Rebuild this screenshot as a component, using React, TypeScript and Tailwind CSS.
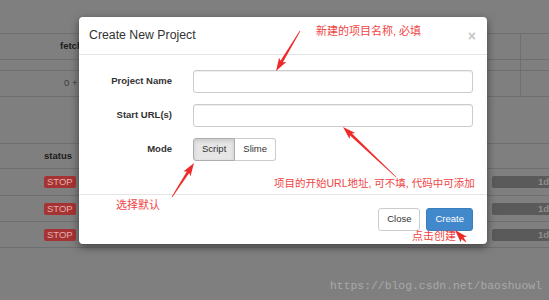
import React from "react"

const arrows = [
  { x1: 300, y1: 31, x2: 276, y2: 71 },
  { x1: 396, y1: 177, x2: 343, y2: 127 },
  { x1: 172, y1: 197, x2: 194, y2: 163 },
  { x1: 466, y1: 242, x2: 455, y2: 230 },
]

// tapered annotation arrow: thin tail, wider shaft near the head
function arrowPoints(x1: number, y1: number, x2: number, y2: number) {
  const dx = x2 - x1
  const dy = y2 - y1
  const len = Math.hypot(dx, dy)
  const ux = dx / len
  const uy = dy / len
  const px = -uy
  const py = ux
  const head = Math.min(11, len * 0.7)
  const hw = 4.2
  const sw = 1.4
  const bx = x2 - ux * head
  const by = y2 - uy * head
  const pts = [
    [x1 + px * 0.3, y1 + py * 0.3],
    [bx + px * sw, by + py * sw],
    [bx - ux * 2 + px * hw, by - uy * 2 + py * hw],
    [x2, y2],
    [bx - ux * 2 - px * hw, by - uy * 2 - py * hw],
    [bx - px * sw, by - py * sw],
    [x1 - px * 0.3, y1 - py * 0.3],
  ]
  return pts.map((p) => p.map((n) => n.toFixed(1)).join(",")).join(" ")
}

const stopRows = ["h-[27px]", "h-[26px]", "h-[27px] border-b"]

export default function App() {
  return (
    <div className="relative w-[549px] h-[300px] overflow-hidden bg-[#7f7f7f] font-['Liberation_Sans',Arial,sans-serif]">
      {/* page behind the backdrop */}
      <div className="pt-[33px] text-[9.5px]">
        <div className="flex h-[26px] border-t border-[#6f6f6f]">
          <div className="w-[521px] border-r border-[#6f6f6f] pl-[60px] flex items-center font-bold text-[#1c1c1c]">
            fetch
          </div>
        </div>
        <div className="flex h-[11px] border-t border-[#6f6f6f]">
          <div className="w-[521px] border-r border-[#6f6f6f]" />
        </div>
        <div className="flex h-[27px] border-t border-b border-[#6f6f6f]">
          <div className="w-[521px] border-r border-[#6f6f6f] pl-[64px] flex items-center text-[#3c3c3c]">
            0 + 0
          </div>
        </div>

        <div className="mt-[46px] h-[25px] border-t border-[#6f6f6f] pl-[44px] flex items-center font-bold text-[#1c1c1c]">
          status
        </div>
        {stopRows.map((cls, i) => (
          <div key={i} className={`${cls} border-t border-[#6f6f6f] flex items-center pl-[44px]`}>
            <span className="h-[12px] leading-[12px] px-[3px] rounded-[2px] bg-[#a63333] text-[#e4acac]">STOP</span>
            <span className="ml-auto w-[57px] h-[12px] leading-[12px] rounded-l-[2px] bg-[#5a5a5a] text-[#8e8e8e] font-bold text-right">
              1d
            </span>
          </div>
        ))}
      </div>

      {/* modal */}
      <div className="absolute left-[79px] top-[17px] w-[408px] h-[227px] bg-white rounded-[4px] shadow-[0_3px_9px_rgba(0,0,0,0.5)] flex flex-col">
        <div className="h-[38px] border-b border-[#e5e5e5] flex items-center justify-between pl-[10px] pr-[11px]">
          <span className="text-[12.3px] text-[#333]">Create New Project</span>
          <span className="text-[14px] font-bold text-[#c6c6c6] leading-none">×</span>
        </div>

        <div className="h-[139px] pt-[15px] flex flex-col gap-[11px] text-[9.5px] text-[#333]">
          <div className="flex items-center">
            <label className="w-[93px] text-right font-bold">Project Name</label>
            <div className="ml-[21px] w-[280px] h-[23px] border border-[#ccc] rounded-[3px] shadow-[inset_0_1px_1px_rgba(0,0,0,0.075)]" />
          </div>
          <div className="flex items-center">
            <label className="w-[93px] text-right font-bold">Start URL(s)</label>
            <div className="ml-[21px] w-[280px] h-[23px] border border-[#ccc] rounded-[3px] shadow-[inset_0_1px_1px_rgba(0,0,0,0.075)]" />
          </div>
          <div className="flex items-center">
            <label className="w-[93px] text-right font-bold">Mode</label>
            <div className="ml-[21px] flex h-[23px]">
              <button className="px-[8px] border border-[#adadad] rounded-l-[3px] bg-[#e6e6e6] shadow-[inset_0_2px_4px_rgba(0,0,0,0.125)] text-[#333]">
                Script
              </button>
              <button className="px-[8px] border border-l-0 border-[#ccc] rounded-r-[3px] bg-white text-[#333]">
                Slime
              </button>
            </div>
          </div>
        </div>

        <div className="flex-1 border-t border-[#e5e5e5] flex items-center justify-end gap-[6px] pr-[14px] text-[9.5px]">
          <button className="h-[23px] px-[8px] border border-[#ccc] rounded-[3px] bg-white text-[#333]">Close</button>
          <button className="h-[23px] px-[8px] border border-[#3a7fbd] rounded-[3px] bg-[#4189cb] text-white">
            Create
          </button>
        </div>
      </div>

      {/* annotations */}
      <div className="absolute inset-0 pointer-events-none font-['Liberation_Sans','Noto_Sans_CJK_SC',sans-serif] text-[11px] leading-[13px] text-[#f04444]">
        <span className="absolute left-[316px] top-[25px]">新建的项目名称, 必填</span>
        <span className="absolute left-[274px] top-[177px] text-[10.5px]">项目的开始URL地址, 可不填, 代码中可添加</span>
        <span className="absolute left-[116px] top-[199px]">选择默认</span>
        <span className="absolute left-[412px] top-[230px]">点击创建</span>
        <svg className="absolute inset-0" width="549" height="300" viewBox="0 0 549 300">
          {arrows.map((a, i) => (
            <polygon key={i} points={arrowPoints(a.x1, a.y1, a.x2, a.y2)} fill="#ee2b2b" />
          ))}
        </svg>
      </div>

      <span className="absolute left-[330px] top-[279px] font-['Liberation_Mono',monospace] text-[11.4px] leading-[14px] text-[#a9a9a9]">
        https://blog.csdn.net/baoshuowl
      </span>
    </div>
  )
}
